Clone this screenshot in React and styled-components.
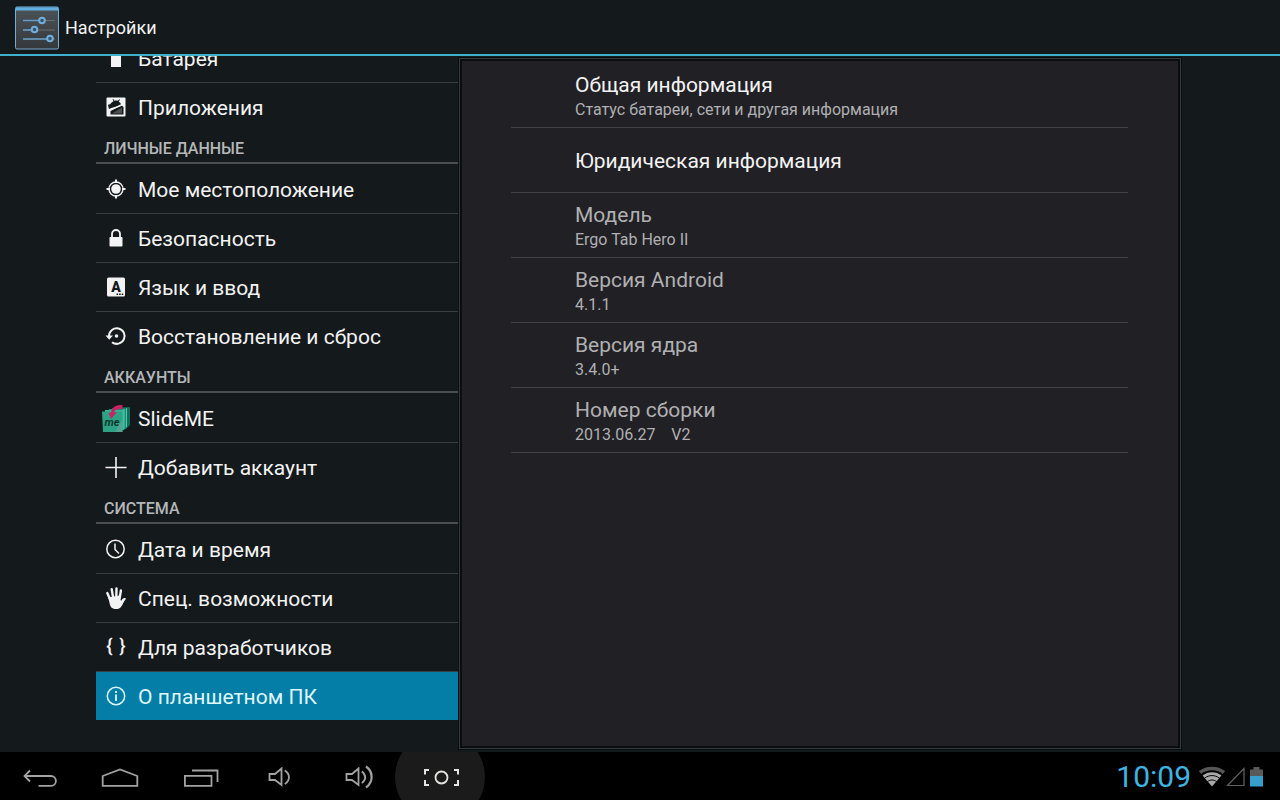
import React from "react";
import styled, { createGlobalStyle } from "styled-components";

const GlobalStyle = createGlobalStyle`
  * {
    box-sizing: border-box;
  }

  body {
    margin: 0;
    background: #000;
    font-family: Roboto, "Noto Sans", sans-serif;
  }

  ul, dl, dd, h1, h2 {
    margin: 0;
    padding: 0;
    list-style: none;
    font-weight: 400;
  }
`;

const Screen = styled.div`
  display: flex;
  flex-direction: column;
  height: 100vh;
  background: #14191c;
  color: #f3f3f3;
`;

const ActionBar = styled.header`
  display: flex;
  align-items: center;
  flex: none;
  gap: 4px;
  height: 56px;
  padding: 2px 0 0 13px;
  border-bottom: 2px solid #41b0cf;
`;

const ActionTitle = styled.h1`
  font-size: 18px;
  line-height: 24px;
`;

const Content = styled.main`
  display: grid;
  grid-template-columns: 363fr 722fr;
  grid-template-rows: 100%;
  flex: 1;
  min-height: 0;
  padding: 0 99px 0 96px;
`;

const Sidebar = styled.nav`
  display: flex;
  flex-direction: column;
  justify-content: flex-end;
  overflow: hidden;
  padding-bottom: 31px;
`;

const SectionTitle = styled.h2`
  height: 32px;
  margin-bottom: 1px;
  padding: 7px 8px 0;
  border-bottom: 2px solid #4a4e50;
  color: #b4b7b8;
  font-size: 16px;
  font-weight: 500;
  line-height: 20px;
  text-transform: uppercase;
`;

const Item = styled.li`
  border-bottom: 1px solid #3a3e40;

  &:last-child {
    border-bottom-color: transparent;
  }
`;

const ItemLink = styled.a`
  display: flex;
  align-items: center;
  gap: 8px;
  height: 48px;
  padding: 2px 0 0 6px;
  background: ${(props) => (props.$active ? "#047ea6" : "transparent")};
  color: ${(props) => (props.$active ? "#dff6ff" : "#f3f3f3")};
  font-size: 21px;
  line-height: 28px;
  text-decoration: none;
  white-space: nowrap;

  svg {
    flex: none;
  }
`;

const Panel = styled.section`
  margin: 2px 0 3px;
  padding: 4px 52px 0 51px;
  border: 1px solid #33393a;
  outline: 1px solid #0b0f11;
  box-shadow: inset 0 0 0 2px #0a0e0f;
  background: #212025;
`;

const Preference = styled.div`
  display: flex;
  flex-direction: column;
  justify-content: center;
  height: 65px;
  padding: 2px 0 0 64px;
  border-bottom: 1px solid #424146;
  color: ${(props) => (props.$enabled ? "#f3f3f3" : "#b0b0b2")};
`;

const PreferenceTitle = styled.dt`
  font-size: 21px;
  line-height: 28px;
`;

const PreferenceSummary = styled.dd`
  color: #b0b0b2;
  font-size: 16px;
  line-height: 22px;
  white-space: pre-wrap;
`;

const SystemBar = styled.footer`
  display: flex;
  align-items: center;
  justify-content: space-between;
  flex: none;
  height: 48px;
  padding: 2px 14px 0 0;
  overflow: hidden;
  background: #000;
`;

const SystemButtons = styled.div`
  display: flex;
`;

const SystemButton = styled.button`
  position: relative;
  display: flex;
  align-items: center;
  justify-content: center;
  width: 80px;
  height: 48px;
  padding: 0;
  border: 0;
  background: none;
  color: ${(props) => (props.$pressed ? "#e4e6e2" : "#a3a3a3")};

  &::before {
    content: "";
    position: absolute;
    inset: -21px -5px;
    border-radius: 50%;
    background: ${(props) => (props.$pressed ? "#1a1b1a" : "none")};
  }

  svg {
    position: relative;
  }
`;

const Status = styled.div`
  display: flex;
  align-items: center;
  gap: 7px;
`;

const StatusIcons = styled.div`
  display: flex;
  align-items: center;
`;

const Clock = styled.time`
  color: #3fb4e0;
  font-size: 30px;
  line-height: 36px;
`;

const SettingsLogo = () => (
  <svg width="48" height="48" viewBox="0 0 48 48" aria-hidden="true">
    <defs>
      <linearGradient id="tile" x1="0" y1="0" x2="0" y2="1">
        <stop offset="0" stopColor="#4b5359" />
        <stop offset="0.5" stopColor="#42464a" />
        <stop offset="1" stopColor="#33383d" />
      </linearGradient>
      <linearGradient id="edge" x1="0" y1="0" x2="0" y2="1">
        <stop offset="0" stopColor="#67b5e6" />
        <stop offset="1" stopColor="#78a9cc" />
      </linearGradient>
    </defs>
    <rect x="2.5" y="3" width="43" height="42" rx="1.5" fill="url(#tile)" stroke="url(#edge)" />
    <path d="M3 3.5h42v3H3z" fill="#62b0e2" />
    <path d="M10 16.5h32M10 26h32M10 35h32" stroke="#686d71" />
    <path d="M10 16.5h16M10 26h8M10 35h24" stroke="#669dc6" strokeWidth="1.6" />
    <g fill="#31536e" stroke="#72aedb" strokeWidth="2">
      <circle cx="29" cy="16.5" r="2.8" />
      <circle cx="21.5" cy="25.5" r="2.8" />
      <circle cx="37" cy="34.5" r="2.8" />
    </g>
  </svg>
);

const Glyph = ({ children }) => (
  <svg
    width="28"
    height="28"
    viewBox="0 0 28 28"
    fill="none"
    stroke="currentColor"
    aria-hidden="true"
  >
    {children}
  </svg>
);

const BatteryIcon = () => (
  <Glyph>
    <path d="M9 6h3V4h4v2h3v16H9z" fill="currentColor" stroke="none" />
  </Glyph>
);

const AppsIcon = () => (
  <Glyph>
    <rect x="4.5" y="3.5" width="19" height="19" rx="1" fill="currentColor" stroke="none" />
    <path
      d="M7.5 14.5c-.5-3 1-6 4-7.3l-.9-1.9.7-.3 1.1 1.800c1.200-.3 2.300-.3 3.400 0l1.700-1.500.5.5-1.300 1.800c1.300.8 2.200 2 2.700 3.400z"
      fill="#14191c"
      stroke="none"
    />
    <path d="M6 11l1.500-1.200 1 4.500-1.500.8zM8.500 16.500L20 11.800l1.500 1.200v7.500H8.500z" fill="#14191c" stroke="none" />
    <path d="M10 19.500l10-6v6z" fill="currentColor" stroke="none" opacity="0.250" />
    <path d="M6.500 17.500l14-7.500" strokeWidth="1.200" />
  </Glyph>
);

const LocationIcon = () => (
  <Glyph>
    <circle cx="14" cy="13" r="4.8" fill="currentColor" stroke="none" />
    <circle cx="14" cy="13" r="7" strokeWidth="1.3" />
    <path d="M14 3.5v3.5M14 19v3.5M4.5 13H8M20 13h3.5" strokeWidth="2" />
  </Glyph>
);

const LockIcon = () => (
  <Glyph>
    <rect x="7.5" y="12" width="13" height="9.5" rx="0.8" fill="currentColor" stroke="none" />
    <path d="M10 12.500V9a4 4 0 0 1 8 0v3.500" strokeWidth="1.8" />
  </Glyph>
);

const LanguageIcon = () => (
  <Glyph>
    <rect x="5" y="3.5" width="18" height="19" rx="1.5" fill="currentColor" stroke="none" />
    <text x="14" y="17.5" textAnchor="middle" fill="#14191c" stroke="none" fontSize="14" fontWeight="900">
      A
    </text>
    <path d="M14.5 20.200h7" stroke="#14191c" strokeWidth="1.6" strokeDasharray="1.6 1" />
  </Glyph>
);

const ResetIcon = () => (
  <Glyph>
    <path d="M7 13a7.800 7.800 0 1 1 3 6.200" strokeWidth="2" />
    <path d="M3.500 12.500h7.500l-3.800 4.200z" fill="currentColor" stroke="none" />
    <circle cx="14.5" cy="13" r="1.8" fill="currentColor" stroke="none" />
  </Glyph>
);

const SlideMeIcon = () => (
  <Glyph>
    <path d="M10 3l18-1v18l-4 4H10z" fill="#0d6f5c" stroke="none" />
    <path d="M7 4h18v18l-3 3H7z" fill="#179078" stroke="none" />
    <path d="M3 5h19v20H3z" fill="#36b496" stroke="none" />
    <path d="M0 6.500h20.500V27H1z" fill="#2da386" stroke="none" />
    <path d="M13 27h7.500V14z" fill="#6fa39a" stroke="none" opacity="0.600" />
    <path d="M24.500 3v19M22 3.500v20" stroke="#68d3b7" strokeWidth="0.8" />
    <path d="M20.500 0c-7-.5-11 3-11.500 7.500l-2.500.5 2.500 6 6-7-3 .5c.5-2.500 3-3.500 8.500-3.500z" fill="#c62463" stroke="none" />
    <text x="10" y="21" textAnchor="middle" fill="#06372f" stroke="none" fontSize="11" fontWeight="700" fontStyle="italic">
      me
    </text>
  </Glyph>
);

const AddIcon = () => (
  <Glyph>
    <path d="M14 3v21M3.500 13.500h21" strokeWidth="1.6" />
  </Glyph>
);

const ClockIcon = () => (
  <Glyph>
    <circle cx="13.500" cy="13" r="8.700" strokeWidth="1.5" />
    <path d="M13 7.500v6l4 4" strokeWidth="1.5" />
  </Glyph>
);

const HandIcon = () => (
  <Glyph>
    <path d="M7.500 13L5.300 8M11 12L9.700 4.200M14.300 12l.2-8.500M17.700 13l1.200-7.500" strokeWidth="2.4" strokeLinecap="round" />
    <path
      d="M6 12.500l11.500-2 1.500 5.500c1.500-2.500 3-3.500 4.700-2.500.4.300.2.700-.2 1.100-2 1.900-2.500 5.500-5 7.900-2.500 2.300-7.500 2-9.500-.5C7.500 20 7.500 16 6 12.500z"
      fill="currentColor"
      stroke="none"
    />
  </Glyph>
);

const BracesIcon = () => (
  <Glyph>
    <g fill="currentColor" stroke="none" fontSize="19" fontWeight="500" textAnchor="middle">
      <text x="7.5" y="18">
        {"{"}
      </text>
      <text x="20.5" y="18">
        {"}"}
      </text>
    </g>
  </Glyph>
);

const InfoIcon = () => (
  <Glyph>
    <circle cx="14" cy="13" r="8.7" strokeWidth="1.5" />
    <path d="M14 8v2M14 11.500v6.500" strokeWidth="1.8" />
  </Glyph>
);

const BarIcon = ({ children, width = 40 }) => (
  <svg
    width={width}
    height="24"
    viewBox={`0 0 ${width} 24`}
    fill="none"
    stroke="currentColor"
    strokeWidth="1.8"
    aria-hidden="true"
  >
    {children}
  </svg>
);

const BackIcon = () => (
  <BarIcon>
    <path d="M10 5.500L4.500 11l5.500 5.500M4.500 11H31a4.800 4.800 0 0 1 0 9.800H18.500" />
  </BarIcon>
);

const HomeIcon = () => (
  <BarIcon>
    <path d="M2.700 20.800V11L20 4.500 37.300 11v9.800z" />
  </BarIcon>
);

const RecentIcon = () => (
  <BarIcon>
    <path d="M4.900 10.900h26.600v9.900H4.900zM12 5.500h25.500V17" />
  </BarIcon>
);

const VolumeDownIcon = () => (
  <BarIcon>
    <path d="M9.500 9h5.500l6.500-5.500v16.500L15 15H9.500zM24.800 5.500c5.500 3.500 5.500 10 0 13.500" />
  </BarIcon>
);

const VolumeUpIcon = () => (
  <BarIcon>
    <path d="M6.500 9H12l6.500-5.500v16.500L12 15H6.500zM21.800 6.500c4.500 3 4.500 8.500 0 11.500" />
    <path d="M26 1.500c7.500 5.500 7.500 15.500 0 21" strokeWidth="2.2" />
  </BarIcon>
);

const ScreenshotIcon = () => (
  <BarIcon>
    <circle cx="21.500" cy="12.500" r="6" />
    <path d="M9 5H5v4.500M5 15v5h4M34 5h4v4.500M38 15v5h-4" strokeWidth="2" />
  </BarIcon>
);

const WifiIcon = () => (
  <BarIcon width={28}>
    <path d="M2 7.500c7-5.500 17-5.500 24 0" stroke="#565656" strokeWidth="3.5" />
    <path d="M4.500 10.500c5.500-4.500 13.500-4.500 19 0L14 21.500z" fill="#a9a9a9" stroke="none" />
    <path d="M6.500 13.200c4.500-3.500 10.500-3.500 15 0M9.500 16.500c3-2 6-2 9 0" stroke="#000" strokeWidth="1" />
  </BarIcon>
);

const SignalIcon = () => (
  <BarIcon width={22}>
    <path d="M1.500 20.500h16.500v-17z" stroke="#626262" strokeWidth="1.2" />
  </BarIcon>
);

const ChargeIcon = () => (
  <BarIcon width={18}>
    <path d="M2 4.500h3.500V2h6v2.500H15V11H2z" fill="#595959" stroke="none" />
    <path d="M2 11h13v10.500H2z" fill="#369fcb" stroke="none" />
  </BarIcon>
);

const sections = [
  {
    items: [
      { label: "Батарея", icon: BatteryIcon },
      { label: "Приложения", icon: AppsIcon },
    ],
  },
  {
    title: "Личные данные",
    items: [
      { label: "Мое местоположение", icon: LocationIcon },
      { label: "Безопасность", icon: LockIcon },
      { label: "Язык и ввод", icon: LanguageIcon },
      { label: "Восстановление и сброс", icon: ResetIcon },
    ],
  },
  {
    title: "Аккаунты",
    items: [
      { label: "SlideME", icon: SlideMeIcon },
      { label: "Добавить аккаунт", icon: AddIcon },
    ],
  },
  {
    title: "Система",
    items: [
      { label: "Дата и время", icon: ClockIcon },
      { label: "Спец. возможности", icon: HandIcon },
      { label: "Для разработчиков", icon: BracesIcon },
      { label: "О планшетном ПК", icon: InfoIcon, active: true },
    ],
  },
];

const preferences = [
  {
    title: "Общая информация",
    summary: "Статус батареи, сети и другая информация",
    enabled: true,
  },
  { title: "Юридическая информация", enabled: true },
  { title: "Модель", summary: "Ergo Tab Hero II" },
  { title: "Версия Android", summary: "4.1.1" },
  { title: "Версия ядра", summary: "3.4.0+" },
  { title: "Номер сборки", summary: "2013.06.27    V2" },
];

const systemButtons = [
  { label: "Назад", icon: BackIcon },
  { label: "Домой", icon: HomeIcon },
  { label: "Недавние", icon: RecentIcon },
  { label: "Тише", icon: VolumeDownIcon },
  { label: "Громче", icon: VolumeUpIcon },
  { label: "Снимок экрана", icon: ScreenshotIcon, pressed: true },
];

const App = () => (
  <>
    <GlobalStyle />
    <Screen>
      <ActionBar>
        <SettingsLogo />
        <ActionTitle>Настройки</ActionTitle>
      </ActionBar>
      <Content>
        <Sidebar>
          {sections.map((section, index) => (
            <div key={index}>
              {section.title && <SectionTitle>{section.title}</SectionTitle>}
              <ul>
                {section.items.map(({ label, icon: Icon, active }) => (
                  <Item key={label}>
                    <ItemLink href="#" $active={active}>
                      <Icon />
                      {label}
                    </ItemLink>
                  </Item>
                ))}
              </ul>
            </div>
          ))}
        </Sidebar>
        <Panel>
          <dl>
            {preferences.map(({ title, summary, enabled }) => (
              <Preference key={title} $enabled={enabled}>
                <PreferenceTitle>{title}</PreferenceTitle>
                {summary && <PreferenceSummary>{summary}</PreferenceSummary>}
              </Preference>
            ))}
          </dl>
        </Panel>
      </Content>
      <SystemBar>
        <SystemButtons>
          {systemButtons.map(({ label, icon: Icon, pressed }) => (
            <SystemButton key={label} type="button" aria-label={label} $pressed={pressed}>
              <Icon />
            </SystemButton>
          ))}
        </SystemButtons>
        <Status>
          <Clock>10:09</Clock>
          <StatusIcons>
            <WifiIcon />
            <SignalIcon />
            <ChargeIcon />
          </StatusIcons>
        </Status>
      </SystemBar>
    </Screen>
  </>
);

export default App;
